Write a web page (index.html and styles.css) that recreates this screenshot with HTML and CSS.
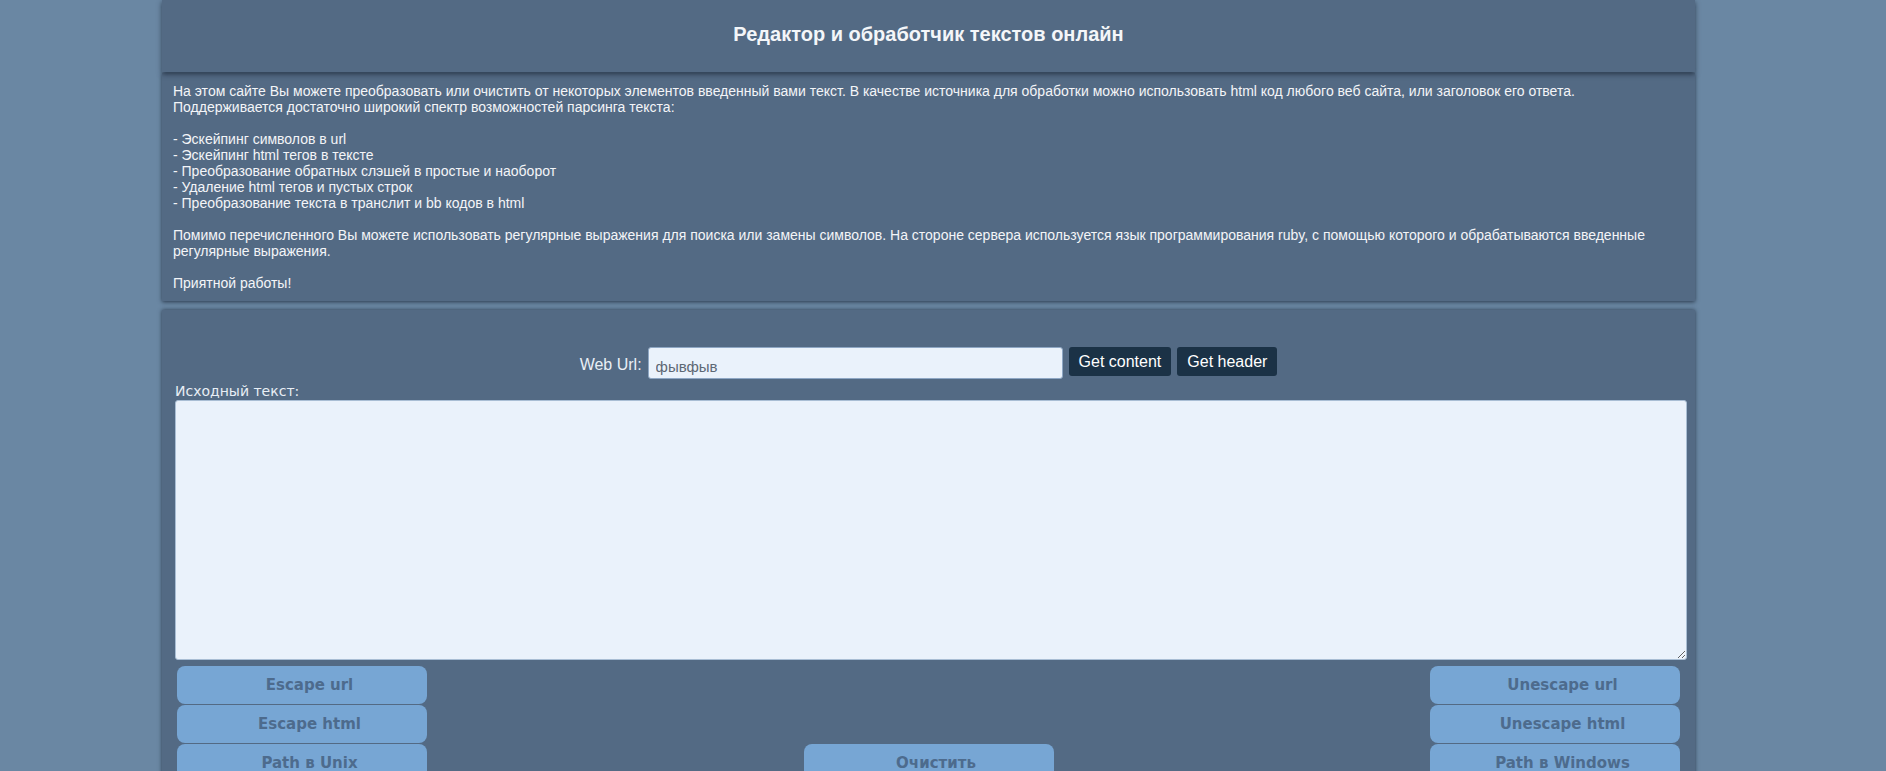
FILE: index.html
```html
<!DOCTYPE html>
<html lang="ru">
<head>
<meta charset="utf-8">
<title>Редактор и обработчик текстов онлайн</title>
<link rel="stylesheet" href="styles.css">
</head>
<body>
<div class="container">
  <header class="header">
    <h1 class="title">Редактор и обработчик текстов онлайн</h1>
  </header>
  <section class="intro">
    <p>На этом сайте Вы можете преобразовать или очистить от некоторых элементов введенный вами текст. В качестве источника для обработки можно использовать html код любого веб сайта, или заголовок его ответа.<br>Поддерживается достаточно широкий спектр возможностей парсинга текста:</p>
    <p>- Эскейпинг символов в url<br>- Эскейпинг html тегов в тексте<br>- Преобразование обратных слэшей в простые и наоборот<br>- Удаление html тегов и пустых строк<br>- Преобразование текста в транслит и bb кодов в html</p>
    <p>Помимо перечисленного Вы можете использовать регулярные выражения для поиска или замены символов. На стороне сервера используется язык программирования ruby, с помощью которого и обрабатываются введенные регулярные выражения.</p>
    <p>Приятной работы!</p>
  </section>
  <section class="workspace">
    <div class="url-row">
      <label class="url-label" for="url">Web Url:</label>
      <input class="url-input" id="url" type="text" value="фывфыв">
      <button class="get-btn">Get content</button>
      <button class="get-btn">Get header</button>
    </div>
    <div class="src-label">Исходный текст:</div>
    <textarea class="src-text"></textarea>
    <div class="actions">
      <div class="col">
        <button class="act">Escape url</button>
        <button class="act">Escape html</button>
        <button class="act">Path в Unix</button>
      </div>
      <div class="col col-mid">
        <button class="act">Очистить</button>
      </div>
      <div class="col">
        <button class="act">Unescape url</button>
        <button class="act">Unescape html</button>
        <button class="act">Path в Windows</button>
      </div>
    </div>
  </section>
</div>
</body>
</html>
```
FILE: styles.css
```css
html, body {
  margin: 0;
  padding: 0;
  height: 100%;
  overflow: hidden;
}
body {
  background: #6a87a3;
  font-family: "Liberation Sans", Arial, sans-serif;
  color: #f3f5f8;
}
.container {
  width: 1533px;
  margin-left: 162px;
}
.header {
  height: 72px;
  background: #536a84;
  display: flex;
  align-items: center;
  justify-content: center;
  box-shadow: 0 2px 5px rgba(20, 30, 45, 0.7);
  position: relative;
  z-index: 1;
}
.title {
  margin: 0;
  font-size: 20px;
  font-weight: bold;
  color: #f4f6f9;
  position: relative;
  top: -2px;
}
.intro {
  margin-top: 1px;
  background: #536a84;
  padding: 10px 11px;
  font-size: 14px;
  line-height: 16px;
  box-shadow: 0 1px 4px rgba(20, 30, 45, 0.75);
}
.intro p {
  margin: 0 0 16px 0;
}
.intro p:last-child {
  margin-bottom: 0;
}
.workspace {
  margin-top: 9px;
  background: #536a84;
  padding-top: 37px;
  height: 600px;
  box-shadow: 0 0 4px rgba(20, 30, 45, 0.75);
}
.url-row {
  display: flex;
  justify-content: center;
  align-items: center;
  height: 32px;
  gap: 6px;
}
.url-label {
  font-size: 16px;
  color: #e9eff6;
  margin-top: 4px;
}
.url-input {
  box-sizing: border-box;
  width: 415px;
  height: 32px;
  border: 1px solid #8ea7c4;
  border-radius: 3px;
  background: #eaf2fb;
  font-family: "Liberation Sans", Arial, sans-serif;
  font-size: 15px;
  color: #5d6874;
  padding: 6px 4px 0 7px;
}
.get-btn {
  box-sizing: border-box;
  height: 29px;
  margin-top: -3px;
  padding: 0 10px;
  border: none;
  border-radius: 3px;
  background: #1b3246;
  color: #ffffff;
  font-family: "Liberation Sans", Arial, sans-serif;
  font-size: 16px;
}
.src-label {
  margin: 4px 0 0 13px;
  font-family: "DejaVu Sans", Verdana, sans-serif;
  font-size: 14px;
  line-height: 17px;
  color: #e8eef5;
}
.src-text {
  display: block;
  box-sizing: border-box;
  margin-left: 13px;
  width: 1512px;
  height: 260px;
  border: 1px solid #a9bed4;
  border-radius: 3px;
  background: #eaf2fb;
  resize: both;
}
.actions {
  display: grid;
  grid-template-columns: 250px 250px 250px;
  justify-content: space-between;
  padding: 6px 15px 0;
}
.col {
  display: flex;
  flex-direction: column;
  gap: 1px;
}
.col-mid {
  padding-top: 78px;
}
.act {
  height: 38px;
  border: none;
  border-radius: 8px;
  background: #77a6d4;
  color: #4d6b8d;
  font-family: "DejaVu Sans", Verdana, sans-serif;
  font-size: 15px;
  font-weight: bold;
  padding: 0 0 0 15px;
}
```
